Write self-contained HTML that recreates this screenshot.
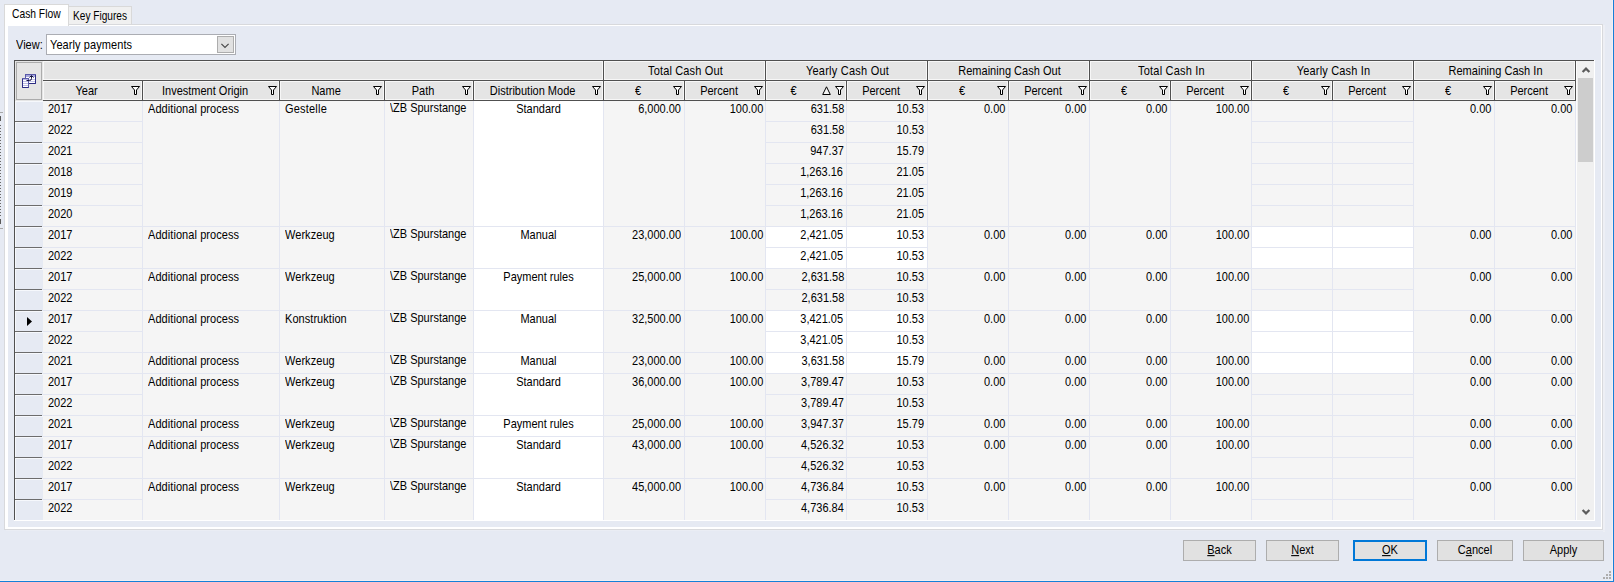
<!DOCTYPE html>
<html><head><meta charset="utf-8"><title>Cash Flow</title>
<style>
html,body{margin:0;padding:0}
body{width:1614px;height:582px;overflow:hidden;background:#E6EAF3;position:relative;font-family:"Liberation Sans",sans-serif;font-size:11px;color:#000}
body div,body svg{position:absolute}
.t{white-space:pre;line-height:13px;height:13px;overflow:visible;transform:scaleY(1.1);transform-origin:0 10.3px}
.btn{box-sizing:border-box;background:#E1E1E1;text-align:center;font-size:11px}
.fn{overflow:visible}
</style></head><body>
<!-- window edges -->
<div style="left:1612px;top:0;width:1px;height:581px;background:#F3EFF3"></div>
<div style="left:0;top:580px;width:1613px;height:1px;background:#F3EFF3"></div>
<div style="left:1613px;top:0;width:1px;height:582px;background:#1580D8"></div>
<div style="left:0;top:581px;width:1614px;height:1px;background:#1580D8"></div>
<div style="left:0;top:112px;width:3px;height:1px;background:#A8A8A8"></div>
<div style="left:0;top:116px;width:1px;height:5px;background:#5A5A5A"></div>
<div style="left:0;top:125px;width:1px;height:92px;background:repeating-linear-gradient(to bottom,#6A6A6A 0,#6A6A6A 1px,transparent 1px,transparent 3px)"></div>
<div style="left:0;top:219px;width:1px;height:5px;background:#5A5A5A"></div>
<div style="left:0;top:228px;width:3px;height:1px;background:#A8A8A8"></div>
<!-- tab panel -->
<div style="left:4px;top:24px;width:1599px;height:506px;background:#D8D9DC"></div>
<div style="left:5px;top:25px;width:1597px;height:504px;background:#fff"></div>
<div style="left:8px;top:26px;width:1593px;height:501px;background:#E6EAF3"></div>
<div style="left:1603px;top:25px;width:2px;height:507px;background:#EDEFF5"></div>
<div style="left:6px;top:530px;width:1599px;height:1px;background:#EAEDF4"></div>
<!-- tabs -->
<div style="left:68px;top:6px;width:64px;height:18px;box-sizing:border-box;background:#F0F0F0;border:1px solid #D9D9D9;border-bottom:none"></div>
<div style="left:4px;top:4px;width:65px;height:22px;box-sizing:border-box;background:#fff;border:1px solid #D9D9D9;border-bottom:none"></div>
<div class="t" style="left:12px;top:8px;transform:scale(0.935,1.1)">Cash Flow</div>
<div class="t" style="left:73px;top:10px;transform:scale(0.92,1.1)">Key Figures</div>
<!-- view combobox -->
<div class="t" style="left:16px;top:39px">View:</div>
<div style="left:46px;top:34px;width:190px;height:21px;box-sizing:border-box;background:#fff;border:1px solid #ABADB3"></div>
<div class="t" style="left:50px;top:39px;letter-spacing:0.08px">Yearly payments</div>
<div style="left:217px;top:36px;width:17px;height:17px;box-sizing:border-box;background:#E1E1E1;border:1px solid #ADADAD"></div>
<svg class="fn" style="left:221px;top:43px" width="8" height="6" viewBox="0 0 8 6"><path d="M0.4 0.9 L4 4.5 L7.6 0.9" stroke="#484848" stroke-width="1.15" fill="none"/></svg>
<!-- grid -->
<div style="left:14px;top:60px;width:1580px;height:460px;background:#F5F5F5;"></div>
<div style="left:15px;top:61px;width:1561px;height:40px;background:#E5E5E5;"></div>
<div style="left:15px;top:101px;width:28px;height:419px;background:#E6EAF3;"></div>
<div style="left:474px;top:101px;width:129px;height:21px;background:#fff;"></div>
<div style="left:43px;top:121px;width:100px;height:1px;background:#E3E6F1;"></div>
<div style="left:766px;top:121px;width:81px;height:1px;background:#E3E6F1;"></div>
<div style="left:847px;top:121px;width:81px;height:1px;background:#E3E6F1;"></div>
<div style="left:1252px;top:121px;width:81px;height:1px;background:#E3E6F1;"></div>
<div style="left:1333px;top:121px;width:81px;height:1px;background:#E3E6F1;"></div>
<div style="left:15px;top:121px;width:27px;height:1px;background:#6C6C6C;"></div>
<div style="left:15px;top:101px;width:28px;height:1px;background:#F6F8FC;"></div>
<div style="left:15px;top:101px;width:1px;height:20px;background:#F6F8FC;"></div>
<div class="t" style="left:48px;top:103px;width:90px;text-align:left;">2017</div>
<div class="t" style="left:148px;top:103px;width:130px;text-align:left;letter-spacing:0.07px">Additional process</div>
<div class="t" style="left:285px;top:103px;width:98px;text-align:left;letter-spacing:0.2px">Gestelle</div>
<div class="t" style="left:390px;top:102px;width:86px;text-align:left;">\ZB Spurstange</div>
<div class="t" style="left:474px;top:103px;width:129px;text-align:center;">Standard</div>
<div class="t" style="left:604px;top:103px;width:77px;text-align:right;">6,000.00</div>
<div class="t" style="left:685px;top:103px;width:78.3px;text-align:right;">100.00</div>
<div class="t" style="left:928px;top:103px;width:77.4px;text-align:right;">0.00</div>
<div class="t" style="left:1009px;top:103px;width:77.4px;text-align:right;">0.00</div>
<div class="t" style="left:1090px;top:103px;width:77.4px;text-align:right;">0.00</div>
<div class="t" style="left:1171px;top:103px;width:78.3px;text-align:right;">100.00</div>
<div class="t" style="left:1414px;top:103px;width:77.4px;text-align:right;">0.00</div>
<div class="t" style="left:1495px;top:103px;width:77.4px;text-align:right;">0.00</div>
<div class="t" style="left:766px;top:103px;width:78.3px;text-align:right;">631.58</div>
<div class="t" style="left:847px;top:103px;width:77px;text-align:right;">10.53</div>
<div style="left:474px;top:122px;width:129px;height:21px;background:#fff;"></div>
<div style="left:43px;top:142px;width:100px;height:1px;background:#E3E6F1;"></div>
<div style="left:766px;top:142px;width:81px;height:1px;background:#E3E6F1;"></div>
<div style="left:847px;top:142px;width:81px;height:1px;background:#E3E6F1;"></div>
<div style="left:1252px;top:142px;width:81px;height:1px;background:#E3E6F1;"></div>
<div style="left:1333px;top:142px;width:81px;height:1px;background:#E3E6F1;"></div>
<div style="left:15px;top:142px;width:27px;height:1px;background:#6C6C6C;"></div>
<div style="left:15px;top:122px;width:28px;height:1px;background:#F6F8FC;"></div>
<div style="left:15px;top:122px;width:1px;height:20px;background:#F6F8FC;"></div>
<div class="t" style="left:48px;top:124px;width:90px;text-align:left;">2022</div>
<div class="t" style="left:766px;top:124px;width:78.3px;text-align:right;">631.58</div>
<div class="t" style="left:847px;top:124px;width:77px;text-align:right;">10.53</div>
<div style="left:474px;top:143px;width:129px;height:21px;background:#fff;"></div>
<div style="left:43px;top:163px;width:100px;height:1px;background:#E3E6F1;"></div>
<div style="left:766px;top:163px;width:81px;height:1px;background:#E3E6F1;"></div>
<div style="left:847px;top:163px;width:81px;height:1px;background:#E3E6F1;"></div>
<div style="left:1252px;top:163px;width:81px;height:1px;background:#E3E6F1;"></div>
<div style="left:1333px;top:163px;width:81px;height:1px;background:#E3E6F1;"></div>
<div style="left:15px;top:163px;width:27px;height:1px;background:#6C6C6C;"></div>
<div style="left:15px;top:143px;width:28px;height:1px;background:#F6F8FC;"></div>
<div style="left:15px;top:143px;width:1px;height:20px;background:#F6F8FC;"></div>
<div class="t" style="left:48px;top:145px;width:90px;text-align:left;">2021</div>
<div class="t" style="left:766px;top:145px;width:77.9px;text-align:right;">947.37</div>
<div class="t" style="left:847px;top:145px;width:77px;text-align:right;">15.79</div>
<div style="left:474px;top:164px;width:129px;height:21px;background:#fff;"></div>
<div style="left:43px;top:184px;width:100px;height:1px;background:#E3E6F1;"></div>
<div style="left:766px;top:184px;width:81px;height:1px;background:#E3E6F1;"></div>
<div style="left:847px;top:184px;width:81px;height:1px;background:#E3E6F1;"></div>
<div style="left:1252px;top:184px;width:81px;height:1px;background:#E3E6F1;"></div>
<div style="left:1333px;top:184px;width:81px;height:1px;background:#E3E6F1;"></div>
<div style="left:15px;top:184px;width:27px;height:1px;background:#6C6C6C;"></div>
<div style="left:15px;top:164px;width:28px;height:1px;background:#F6F8FC;"></div>
<div style="left:15px;top:164px;width:1px;height:20px;background:#F6F8FC;"></div>
<div class="t" style="left:48px;top:166px;width:90px;text-align:left;">2018</div>
<div class="t" style="left:766px;top:166px;width:77.0px;text-align:right;">1,263.16</div>
<div class="t" style="left:847px;top:166px;width:77px;text-align:right;">21.05</div>
<div style="left:474px;top:185px;width:129px;height:21px;background:#fff;"></div>
<div style="left:43px;top:205px;width:100px;height:1px;background:#E3E6F1;"></div>
<div style="left:766px;top:205px;width:81px;height:1px;background:#E3E6F1;"></div>
<div style="left:847px;top:205px;width:81px;height:1px;background:#E3E6F1;"></div>
<div style="left:1252px;top:205px;width:81px;height:1px;background:#E3E6F1;"></div>
<div style="left:1333px;top:205px;width:81px;height:1px;background:#E3E6F1;"></div>
<div style="left:15px;top:205px;width:27px;height:1px;background:#6C6C6C;"></div>
<div style="left:15px;top:185px;width:28px;height:1px;background:#F6F8FC;"></div>
<div style="left:15px;top:185px;width:1px;height:20px;background:#F6F8FC;"></div>
<div class="t" style="left:48px;top:187px;width:90px;text-align:left;">2019</div>
<div class="t" style="left:766px;top:187px;width:77.0px;text-align:right;">1,263.16</div>
<div class="t" style="left:847px;top:187px;width:77px;text-align:right;">21.05</div>
<div style="left:474px;top:206px;width:129px;height:21px;background:#fff;"></div>
<div style="left:43px;top:226px;width:1533px;height:1px;background:#E3E6F1;"></div>
<div style="left:15px;top:226px;width:27px;height:1px;background:#6C6C6C;"></div>
<div style="left:15px;top:206px;width:28px;height:1px;background:#F6F8FC;"></div>
<div style="left:15px;top:206px;width:1px;height:20px;background:#F6F8FC;"></div>
<div class="t" style="left:48px;top:208px;width:90px;text-align:left;">2020</div>
<div class="t" style="left:766px;top:208px;width:77.0px;text-align:right;">1,263.16</div>
<div class="t" style="left:847px;top:208px;width:77px;text-align:right;">21.05</div>
<div style="left:474px;top:227px;width:129px;height:21px;background:#fff;"></div>
<div style="left:766px;top:227px;width:161px;height:21px;background:#fff;"></div>
<div style="left:1252px;top:227px;width:161px;height:21px;background:#fff;"></div>
<div style="left:43px;top:247px;width:100px;height:1px;background:#E3E6F1;"></div>
<div style="left:766px;top:247px;width:81px;height:1px;background:#E3E6F1;"></div>
<div style="left:847px;top:247px;width:81px;height:1px;background:#E3E6F1;"></div>
<div style="left:1252px;top:247px;width:81px;height:1px;background:#E3E6F1;"></div>
<div style="left:1333px;top:247px;width:81px;height:1px;background:#E3E6F1;"></div>
<div style="left:15px;top:247px;width:27px;height:1px;background:#6C6C6C;"></div>
<div style="left:15px;top:227px;width:28px;height:1px;background:#F6F8FC;"></div>
<div style="left:15px;top:227px;width:1px;height:20px;background:#F6F8FC;"></div>
<div class="t" style="left:48px;top:229px;width:90px;text-align:left;">2017</div>
<div class="t" style="left:148px;top:229px;width:130px;text-align:left;letter-spacing:0.07px">Additional process</div>
<div class="t" style="left:285px;top:229px;width:98px;text-align:left;letter-spacing:0.05px">Werkzeug</div>
<div class="t" style="left:390px;top:228px;width:86px;text-align:left;">\ZB Spurstange</div>
<div class="t" style="left:474px;top:229px;width:129px;text-align:center;">Manual</div>
<div class="t" style="left:604px;top:229px;width:77px;text-align:right;">23,000.00</div>
<div class="t" style="left:685px;top:229px;width:78.3px;text-align:right;">100.00</div>
<div class="t" style="left:928px;top:229px;width:77.4px;text-align:right;">0.00</div>
<div class="t" style="left:1009px;top:229px;width:77.4px;text-align:right;">0.00</div>
<div class="t" style="left:1090px;top:229px;width:77.4px;text-align:right;">0.00</div>
<div class="t" style="left:1171px;top:229px;width:78.3px;text-align:right;">100.00</div>
<div class="t" style="left:1414px;top:229px;width:77.4px;text-align:right;">0.00</div>
<div class="t" style="left:1495px;top:229px;width:77.4px;text-align:right;">0.00</div>
<div class="t" style="left:766px;top:229px;width:77.1px;text-align:right;">2,421.05</div>
<div class="t" style="left:847px;top:229px;width:77px;text-align:right;">10.53</div>
<div style="left:474px;top:248px;width:129px;height:21px;background:#fff;"></div>
<div style="left:766px;top:248px;width:161px;height:21px;background:#fff;"></div>
<div style="left:1252px;top:248px;width:161px;height:21px;background:#fff;"></div>
<div style="left:43px;top:268px;width:1533px;height:1px;background:#E3E6F1;"></div>
<div style="left:15px;top:268px;width:27px;height:1px;background:#6C6C6C;"></div>
<div style="left:15px;top:248px;width:28px;height:1px;background:#F6F8FC;"></div>
<div style="left:15px;top:248px;width:1px;height:20px;background:#F6F8FC;"></div>
<div class="t" style="left:48px;top:250px;width:90px;text-align:left;">2022</div>
<div class="t" style="left:766px;top:250px;width:77.1px;text-align:right;">2,421.05</div>
<div class="t" style="left:847px;top:250px;width:77px;text-align:right;">10.53</div>
<div style="left:474px;top:269px;width:129px;height:21px;background:#fff;"></div>
<div style="left:43px;top:289px;width:100px;height:1px;background:#E3E6F1;"></div>
<div style="left:766px;top:289px;width:81px;height:1px;background:#E3E6F1;"></div>
<div style="left:847px;top:289px;width:81px;height:1px;background:#E3E6F1;"></div>
<div style="left:1252px;top:289px;width:81px;height:1px;background:#E3E6F1;"></div>
<div style="left:1333px;top:289px;width:81px;height:1px;background:#E3E6F1;"></div>
<div style="left:15px;top:289px;width:27px;height:1px;background:#6C6C6C;"></div>
<div style="left:15px;top:269px;width:28px;height:1px;background:#F6F8FC;"></div>
<div style="left:15px;top:269px;width:1px;height:20px;background:#F6F8FC;"></div>
<div class="t" style="left:48px;top:271px;width:90px;text-align:left;">2017</div>
<div class="t" style="left:148px;top:271px;width:130px;text-align:left;letter-spacing:0.07px">Additional process</div>
<div class="t" style="left:285px;top:271px;width:98px;text-align:left;letter-spacing:0.05px">Werkzeug</div>
<div class="t" style="left:390px;top:270px;width:86px;text-align:left;">\ZB Spurstange</div>
<div class="t" style="left:474px;top:271px;width:129px;text-align:center;">Payment rules</div>
<div class="t" style="left:604px;top:271px;width:77px;text-align:right;">25,000.00</div>
<div class="t" style="left:685px;top:271px;width:78.3px;text-align:right;">100.00</div>
<div class="t" style="left:928px;top:271px;width:77.4px;text-align:right;">0.00</div>
<div class="t" style="left:1009px;top:271px;width:77.4px;text-align:right;">0.00</div>
<div class="t" style="left:1090px;top:271px;width:77.4px;text-align:right;">0.00</div>
<div class="t" style="left:1171px;top:271px;width:78.3px;text-align:right;">100.00</div>
<div class="t" style="left:1414px;top:271px;width:77.4px;text-align:right;">0.00</div>
<div class="t" style="left:1495px;top:271px;width:77.4px;text-align:right;">0.00</div>
<div class="t" style="left:766px;top:271px;width:78.3px;text-align:right;">2,631.58</div>
<div class="t" style="left:847px;top:271px;width:77px;text-align:right;">10.53</div>
<div style="left:474px;top:290px;width:129px;height:21px;background:#fff;"></div>
<div style="left:43px;top:310px;width:1533px;height:1px;background:#E3E6F1;"></div>
<div style="left:15px;top:310px;width:27px;height:1px;background:#6C6C6C;"></div>
<div style="left:15px;top:290px;width:28px;height:1px;background:#F6F8FC;"></div>
<div style="left:15px;top:290px;width:1px;height:20px;background:#F6F8FC;"></div>
<div class="t" style="left:48px;top:292px;width:90px;text-align:left;">2022</div>
<div class="t" style="left:766px;top:292px;width:78.3px;text-align:right;">2,631.58</div>
<div class="t" style="left:847px;top:292px;width:77px;text-align:right;">10.53</div>
<div style="left:474px;top:311px;width:129px;height:21px;background:#fff;"></div>
<div style="left:766px;top:311px;width:161px;height:21px;background:#fff;"></div>
<div style="left:1252px;top:311px;width:161px;height:21px;background:#fff;"></div>
<div style="left:43px;top:331px;width:100px;height:1px;background:#E3E6F1;"></div>
<div style="left:766px;top:331px;width:81px;height:1px;background:#E3E6F1;"></div>
<div style="left:847px;top:331px;width:81px;height:1px;background:#E3E6F1;"></div>
<div style="left:1252px;top:331px;width:81px;height:1px;background:#E3E6F1;"></div>
<div style="left:1333px;top:331px;width:81px;height:1px;background:#E3E6F1;"></div>
<div style="left:15px;top:331px;width:27px;height:1px;background:#6C6C6C;"></div>
<div style="left:15px;top:311px;width:28px;height:1px;background:#F6F8FC;"></div>
<div style="left:15px;top:311px;width:1px;height:20px;background:#F6F8FC;"></div>
<div class="t" style="left:48px;top:313px;width:90px;text-align:left;">2017</div>
<div class="t" style="left:148px;top:313px;width:130px;text-align:left;letter-spacing:0.07px">Additional process</div>
<div class="t" style="left:285px;top:313px;width:98px;text-align:left;letter-spacing:0.05px">Konstruktion</div>
<div class="t" style="left:390px;top:312px;width:86px;text-align:left;">\ZB Spurstange</div>
<div class="t" style="left:474px;top:313px;width:129px;text-align:center;">Manual</div>
<div class="t" style="left:604px;top:313px;width:77px;text-align:right;">32,500.00</div>
<div class="t" style="left:685px;top:313px;width:78.3px;text-align:right;">100.00</div>
<div class="t" style="left:928px;top:313px;width:77.4px;text-align:right;">0.00</div>
<div class="t" style="left:1009px;top:313px;width:77.4px;text-align:right;">0.00</div>
<div class="t" style="left:1090px;top:313px;width:77.4px;text-align:right;">0.00</div>
<div class="t" style="left:1171px;top:313px;width:78.3px;text-align:right;">100.00</div>
<div class="t" style="left:1414px;top:313px;width:77.4px;text-align:right;">0.00</div>
<div class="t" style="left:1495px;top:313px;width:77.4px;text-align:right;">0.00</div>
<div class="t" style="left:766px;top:313px;width:77.1px;text-align:right;">3,421.05</div>
<div class="t" style="left:847px;top:313px;width:77px;text-align:right;">10.53</div>
<div style="left:474px;top:332px;width:129px;height:21px;background:#fff;"></div>
<div style="left:766px;top:332px;width:161px;height:21px;background:#fff;"></div>
<div style="left:1252px;top:332px;width:161px;height:21px;background:#fff;"></div>
<div style="left:43px;top:352px;width:1533px;height:1px;background:#E3E6F1;"></div>
<div style="left:15px;top:352px;width:27px;height:1px;background:#6C6C6C;"></div>
<div style="left:15px;top:332px;width:28px;height:1px;background:#F6F8FC;"></div>
<div style="left:15px;top:332px;width:1px;height:20px;background:#F6F8FC;"></div>
<div class="t" style="left:48px;top:334px;width:90px;text-align:left;">2022</div>
<div class="t" style="left:766px;top:334px;width:77.1px;text-align:right;">3,421.05</div>
<div class="t" style="left:847px;top:334px;width:77px;text-align:right;">10.53</div>
<div style="left:474px;top:353px;width:129px;height:21px;background:#fff;"></div>
<div style="left:766px;top:353px;width:161px;height:21px;background:#fff;"></div>
<div style="left:1252px;top:353px;width:161px;height:21px;background:#fff;"></div>
<div style="left:43px;top:373px;width:1533px;height:1px;background:#E3E6F1;"></div>
<div style="left:15px;top:373px;width:27px;height:1px;background:#6C6C6C;"></div>
<div style="left:15px;top:353px;width:28px;height:1px;background:#F6F8FC;"></div>
<div style="left:15px;top:353px;width:1px;height:20px;background:#F6F8FC;"></div>
<div class="t" style="left:48px;top:355px;width:90px;text-align:left;">2021</div>
<div class="t" style="left:148px;top:355px;width:130px;text-align:left;letter-spacing:0.07px">Additional process</div>
<div class="t" style="left:285px;top:355px;width:98px;text-align:left;letter-spacing:0.05px">Werkzeug</div>
<div class="t" style="left:390px;top:354px;width:86px;text-align:left;">\ZB Spurstange</div>
<div class="t" style="left:474px;top:355px;width:129px;text-align:center;">Manual</div>
<div class="t" style="left:604px;top:355px;width:77px;text-align:right;">23,000.00</div>
<div class="t" style="left:685px;top:355px;width:78.3px;text-align:right;">100.00</div>
<div class="t" style="left:928px;top:355px;width:77.4px;text-align:right;">0.00</div>
<div class="t" style="left:1009px;top:355px;width:77.4px;text-align:right;">0.00</div>
<div class="t" style="left:1090px;top:355px;width:77.4px;text-align:right;">0.00</div>
<div class="t" style="left:1171px;top:355px;width:78.3px;text-align:right;">100.00</div>
<div class="t" style="left:1414px;top:355px;width:77.4px;text-align:right;">0.00</div>
<div class="t" style="left:1495px;top:355px;width:77.4px;text-align:right;">0.00</div>
<div class="t" style="left:766px;top:355px;width:78.3px;text-align:right;">3,631.58</div>
<div class="t" style="left:847px;top:355px;width:77px;text-align:right;">15.79</div>
<div style="left:474px;top:374px;width:129px;height:21px;background:#fff;"></div>
<div style="left:43px;top:394px;width:100px;height:1px;background:#E3E6F1;"></div>
<div style="left:766px;top:394px;width:81px;height:1px;background:#E3E6F1;"></div>
<div style="left:847px;top:394px;width:81px;height:1px;background:#E3E6F1;"></div>
<div style="left:1252px;top:394px;width:81px;height:1px;background:#E3E6F1;"></div>
<div style="left:1333px;top:394px;width:81px;height:1px;background:#E3E6F1;"></div>
<div style="left:15px;top:394px;width:27px;height:1px;background:#6C6C6C;"></div>
<div style="left:15px;top:374px;width:28px;height:1px;background:#F6F8FC;"></div>
<div style="left:15px;top:374px;width:1px;height:20px;background:#F6F8FC;"></div>
<div class="t" style="left:48px;top:376px;width:90px;text-align:left;">2017</div>
<div class="t" style="left:148px;top:376px;width:130px;text-align:left;letter-spacing:0.07px">Additional process</div>
<div class="t" style="left:285px;top:376px;width:98px;text-align:left;letter-spacing:0.05px">Werkzeug</div>
<div class="t" style="left:390px;top:375px;width:86px;text-align:left;">\ZB Spurstange</div>
<div class="t" style="left:474px;top:376px;width:129px;text-align:center;">Standard</div>
<div class="t" style="left:604px;top:376px;width:77px;text-align:right;">36,000.00</div>
<div class="t" style="left:685px;top:376px;width:78.3px;text-align:right;">100.00</div>
<div class="t" style="left:928px;top:376px;width:77.4px;text-align:right;">0.00</div>
<div class="t" style="left:1009px;top:376px;width:77.4px;text-align:right;">0.00</div>
<div class="t" style="left:1090px;top:376px;width:77.4px;text-align:right;">0.00</div>
<div class="t" style="left:1171px;top:376px;width:78.3px;text-align:right;">100.00</div>
<div class="t" style="left:1414px;top:376px;width:77.4px;text-align:right;">0.00</div>
<div class="t" style="left:1495px;top:376px;width:77.4px;text-align:right;">0.00</div>
<div class="t" style="left:766px;top:376px;width:77.9px;text-align:right;">3,789.47</div>
<div class="t" style="left:847px;top:376px;width:77px;text-align:right;">10.53</div>
<div style="left:474px;top:395px;width:129px;height:21px;background:#fff;"></div>
<div style="left:43px;top:415px;width:1533px;height:1px;background:#E3E6F1;"></div>
<div style="left:15px;top:415px;width:27px;height:1px;background:#6C6C6C;"></div>
<div style="left:15px;top:395px;width:28px;height:1px;background:#F6F8FC;"></div>
<div style="left:15px;top:395px;width:1px;height:20px;background:#F6F8FC;"></div>
<div class="t" style="left:48px;top:397px;width:90px;text-align:left;">2022</div>
<div class="t" style="left:766px;top:397px;width:77.9px;text-align:right;">3,789.47</div>
<div class="t" style="left:847px;top:397px;width:77px;text-align:right;">10.53</div>
<div style="left:474px;top:416px;width:129px;height:21px;background:#fff;"></div>
<div style="left:43px;top:436px;width:1533px;height:1px;background:#E3E6F1;"></div>
<div style="left:15px;top:436px;width:27px;height:1px;background:#6C6C6C;"></div>
<div style="left:15px;top:416px;width:28px;height:1px;background:#F6F8FC;"></div>
<div style="left:15px;top:416px;width:1px;height:20px;background:#F6F8FC;"></div>
<div class="t" style="left:48px;top:418px;width:90px;text-align:left;">2021</div>
<div class="t" style="left:148px;top:418px;width:130px;text-align:left;letter-spacing:0.07px">Additional process</div>
<div class="t" style="left:285px;top:418px;width:98px;text-align:left;letter-spacing:0.05px">Werkzeug</div>
<div class="t" style="left:390px;top:417px;width:86px;text-align:left;">\ZB Spurstange</div>
<div class="t" style="left:474px;top:418px;width:129px;text-align:center;">Payment rules</div>
<div class="t" style="left:604px;top:418px;width:77px;text-align:right;">25,000.00</div>
<div class="t" style="left:685px;top:418px;width:78.3px;text-align:right;">100.00</div>
<div class="t" style="left:928px;top:418px;width:77.4px;text-align:right;">0.00</div>
<div class="t" style="left:1009px;top:418px;width:77.4px;text-align:right;">0.00</div>
<div class="t" style="left:1090px;top:418px;width:77.4px;text-align:right;">0.00</div>
<div class="t" style="left:1171px;top:418px;width:78.3px;text-align:right;">100.00</div>
<div class="t" style="left:1414px;top:418px;width:77.4px;text-align:right;">0.00</div>
<div class="t" style="left:1495px;top:418px;width:77.4px;text-align:right;">0.00</div>
<div class="t" style="left:766px;top:418px;width:77.9px;text-align:right;">3,947.37</div>
<div class="t" style="left:847px;top:418px;width:77px;text-align:right;">15.79</div>
<div style="left:474px;top:437px;width:129px;height:21px;background:#fff;"></div>
<div style="left:43px;top:457px;width:100px;height:1px;background:#E3E6F1;"></div>
<div style="left:766px;top:457px;width:81px;height:1px;background:#E3E6F1;"></div>
<div style="left:847px;top:457px;width:81px;height:1px;background:#E3E6F1;"></div>
<div style="left:1252px;top:457px;width:81px;height:1px;background:#E3E6F1;"></div>
<div style="left:1333px;top:457px;width:81px;height:1px;background:#E3E6F1;"></div>
<div style="left:15px;top:457px;width:27px;height:1px;background:#6C6C6C;"></div>
<div style="left:15px;top:437px;width:28px;height:1px;background:#F6F8FC;"></div>
<div style="left:15px;top:437px;width:1px;height:20px;background:#F6F8FC;"></div>
<div class="t" style="left:48px;top:439px;width:90px;text-align:left;">2017</div>
<div class="t" style="left:148px;top:439px;width:130px;text-align:left;letter-spacing:0.07px">Additional process</div>
<div class="t" style="left:285px;top:439px;width:98px;text-align:left;letter-spacing:0.05px">Werkzeug</div>
<div class="t" style="left:390px;top:438px;width:86px;text-align:left;">\ZB Spurstange</div>
<div class="t" style="left:474px;top:439px;width:129px;text-align:center;">Standard</div>
<div class="t" style="left:604px;top:439px;width:77px;text-align:right;">43,000.00</div>
<div class="t" style="left:685px;top:439px;width:78.3px;text-align:right;">100.00</div>
<div class="t" style="left:928px;top:439px;width:77.4px;text-align:right;">0.00</div>
<div class="t" style="left:1009px;top:439px;width:77.4px;text-align:right;">0.00</div>
<div class="t" style="left:1090px;top:439px;width:77.4px;text-align:right;">0.00</div>
<div class="t" style="left:1171px;top:439px;width:78.3px;text-align:right;">100.00</div>
<div class="t" style="left:1414px;top:439px;width:77.4px;text-align:right;">0.00</div>
<div class="t" style="left:1495px;top:439px;width:77.4px;text-align:right;">0.00</div>
<div class="t" style="left:766px;top:439px;width:77.8px;text-align:right;">4,526.32</div>
<div class="t" style="left:847px;top:439px;width:77px;text-align:right;">10.53</div>
<div style="left:474px;top:458px;width:129px;height:21px;background:#fff;"></div>
<div style="left:43px;top:478px;width:1533px;height:1px;background:#E3E6F1;"></div>
<div style="left:15px;top:478px;width:27px;height:1px;background:#6C6C6C;"></div>
<div style="left:15px;top:458px;width:28px;height:1px;background:#F6F8FC;"></div>
<div style="left:15px;top:458px;width:1px;height:20px;background:#F6F8FC;"></div>
<div class="t" style="left:48px;top:460px;width:90px;text-align:left;">2022</div>
<div class="t" style="left:766px;top:460px;width:77.8px;text-align:right;">4,526.32</div>
<div class="t" style="left:847px;top:460px;width:77px;text-align:right;">10.53</div>
<div style="left:474px;top:479px;width:129px;height:21px;background:#fff;"></div>
<div style="left:43px;top:499px;width:100px;height:1px;background:#E3E6F1;"></div>
<div style="left:766px;top:499px;width:81px;height:1px;background:#E3E6F1;"></div>
<div style="left:847px;top:499px;width:81px;height:1px;background:#E3E6F1;"></div>
<div style="left:1252px;top:499px;width:81px;height:1px;background:#E3E6F1;"></div>
<div style="left:1333px;top:499px;width:81px;height:1px;background:#E3E6F1;"></div>
<div style="left:15px;top:499px;width:27px;height:1px;background:#6C6C6C;"></div>
<div style="left:15px;top:479px;width:28px;height:1px;background:#F6F8FC;"></div>
<div style="left:15px;top:479px;width:1px;height:20px;background:#F6F8FC;"></div>
<div class="t" style="left:48px;top:481px;width:90px;text-align:left;">2017</div>
<div class="t" style="left:148px;top:481px;width:130px;text-align:left;letter-spacing:0.07px">Additional process</div>
<div class="t" style="left:285px;top:481px;width:98px;text-align:left;letter-spacing:0.05px">Werkzeug</div>
<div class="t" style="left:390px;top:480px;width:86px;text-align:left;">\ZB Spurstange</div>
<div class="t" style="left:474px;top:481px;width:129px;text-align:center;">Standard</div>
<div class="t" style="left:604px;top:481px;width:77px;text-align:right;">45,000.00</div>
<div class="t" style="left:685px;top:481px;width:78.3px;text-align:right;">100.00</div>
<div class="t" style="left:928px;top:481px;width:77.4px;text-align:right;">0.00</div>
<div class="t" style="left:1009px;top:481px;width:77.4px;text-align:right;">0.00</div>
<div class="t" style="left:1090px;top:481px;width:77.4px;text-align:right;">0.00</div>
<div class="t" style="left:1171px;top:481px;width:78.3px;text-align:right;">100.00</div>
<div class="t" style="left:1414px;top:481px;width:77.4px;text-align:right;">0.00</div>
<div class="t" style="left:1495px;top:481px;width:77.4px;text-align:right;">0.00</div>
<div class="t" style="left:766px;top:481px;width:77.8px;text-align:right;">4,736.84</div>
<div class="t" style="left:847px;top:481px;width:77px;text-align:right;">10.53</div>
<div style="left:474px;top:500px;width:129px;height:21px;background:#fff;"></div>
<div style="left:43px;top:520px;width:1533px;height:1px;background:#E3E6F1;"></div>
<div style="left:15px;top:520px;width:27px;height:1px;background:#6C6C6C;"></div>
<div style="left:15px;top:500px;width:28px;height:1px;background:#F6F8FC;"></div>
<div style="left:15px;top:500px;width:1px;height:20px;background:#F6F8FC;"></div>
<div class="t" style="left:48px;top:502px;width:90px;text-align:left;">2022</div>
<div class="t" style="left:766px;top:502px;width:77.8px;text-align:right;">4,736.84</div>
<div class="t" style="left:847px;top:502px;width:77px;text-align:right;">10.53</div>
<div style="left:142px;top:101px;width:1px;height:419px;background:#E3E6F1;"></div>
<div style="left:279px;top:101px;width:1px;height:419px;background:#E3E6F1;"></div>
<div style="left:384px;top:101px;width:1px;height:419px;background:#E3E6F1;"></div>
<div style="left:473px;top:101px;width:1px;height:419px;background:#E3E6F1;"></div>
<div style="left:603px;top:101px;width:1px;height:419px;background:#E3E6F1;"></div>
<div style="left:684px;top:101px;width:1px;height:419px;background:#E3E6F1;"></div>
<div style="left:765px;top:101px;width:1px;height:419px;background:#E3E6F1;"></div>
<div style="left:846px;top:101px;width:1px;height:419px;background:#E3E6F1;"></div>
<div style="left:927px;top:101px;width:1px;height:419px;background:#E3E6F1;"></div>
<div style="left:1008px;top:101px;width:1px;height:419px;background:#E3E6F1;"></div>
<div style="left:1089px;top:101px;width:1px;height:419px;background:#E3E6F1;"></div>
<div style="left:1170px;top:101px;width:1px;height:419px;background:#E3E6F1;"></div>
<div style="left:1251px;top:101px;width:1px;height:419px;background:#E3E6F1;"></div>
<div style="left:1332px;top:101px;width:1px;height:419px;background:#E3E6F1;"></div>
<div style="left:1413px;top:101px;width:1px;height:419px;background:#E3E6F1;"></div>
<div style="left:1494px;top:101px;width:1px;height:419px;background:#E3E6F1;"></div>
<div style="left:1575px;top:101px;width:1px;height:419px;background:#E3E6F1;"></div>
<svg class="fn" style="left:27px;top:317px" width="5" height="9" viewBox="0 0 5 9"><path d="M0 0 L5 4.5 L0 9 Z" fill="#000"/></svg>
<div style="left:14px;top:60px;width:1581px;height:1px;background:#505050;"></div>
<div style="left:14px;top:60px;width:1px;height:460px;background:#505050;"></div>
<div style="left:43px;top:80px;width:1533px;height:1px;background:#505050;"></div>
<div style="left:43px;top:100px;width:1533px;height:1px;background:#505050;"></div>
<div style="left:1575px;top:61px;width:1px;height:40px;background:#505050;"></div>
<div style="left:16px;top:62px;width:26px;height:38px;background:#E5E5E5;box-sizing:border-box;border:1px solid #ACACAC"></div>
<div style="left:142px;top:81px;width:1px;height:20px;background:#505050;"></div>
<div style="left:279px;top:81px;width:1px;height:20px;background:#505050;"></div>
<div style="left:384px;top:81px;width:1px;height:20px;background:#505050;"></div>
<div style="left:473px;top:81px;width:1px;height:20px;background:#505050;"></div>
<div style="left:603px;top:61px;width:1px;height:40px;background:#505050;"></div>
<div style="left:684px;top:81px;width:1px;height:20px;background:#505050;"></div>
<div style="left:765px;top:61px;width:1px;height:40px;background:#505050;"></div>
<div style="left:846px;top:81px;width:1px;height:20px;background:#505050;"></div>
<div style="left:927px;top:61px;width:1px;height:40px;background:#505050;"></div>
<div style="left:1008px;top:81px;width:1px;height:20px;background:#505050;"></div>
<div style="left:1089px;top:61px;width:1px;height:40px;background:#505050;"></div>
<div style="left:1170px;top:81px;width:1px;height:20px;background:#505050;"></div>
<div style="left:1251px;top:61px;width:1px;height:40px;background:#505050;"></div>
<div style="left:1332px;top:81px;width:1px;height:20px;background:#505050;"></div>
<div style="left:1413px;top:61px;width:1px;height:40px;background:#505050;"></div>
<div style="left:1494px;top:81px;width:1px;height:20px;background:#505050;"></div>
<div style="left:43px;top:61px;width:560px;height:1px;background:#F7F7F7;"></div>
<div style="left:43px;top:79px;width:560px;height:1px;background:#F7F7F7;"></div>
<div style="left:43px;top:61px;width:1px;height:19px;background:#F7F7F7;"></div>
<div style="left:602px;top:61px;width:1px;height:19px;background:#F7F7F7;"></div>
<div style="left:604px;top:61px;width:161px;height:1px;background:#F7F7F7;"></div>
<div style="left:604px;top:79px;width:161px;height:1px;background:#F7F7F7;"></div>
<div style="left:604px;top:61px;width:1px;height:19px;background:#F7F7F7;"></div>
<div style="left:764px;top:61px;width:1px;height:19px;background:#F7F7F7;"></div>
<div style="left:766px;top:61px;width:161px;height:1px;background:#F7F7F7;"></div>
<div style="left:766px;top:79px;width:161px;height:1px;background:#F7F7F7;"></div>
<div style="left:766px;top:61px;width:1px;height:19px;background:#F7F7F7;"></div>
<div style="left:926px;top:61px;width:1px;height:19px;background:#F7F7F7;"></div>
<div style="left:928px;top:61px;width:161px;height:1px;background:#F7F7F7;"></div>
<div style="left:928px;top:79px;width:161px;height:1px;background:#F7F7F7;"></div>
<div style="left:928px;top:61px;width:1px;height:19px;background:#F7F7F7;"></div>
<div style="left:1088px;top:61px;width:1px;height:19px;background:#F7F7F7;"></div>
<div style="left:1090px;top:61px;width:161px;height:1px;background:#F7F7F7;"></div>
<div style="left:1090px;top:79px;width:161px;height:1px;background:#F7F7F7;"></div>
<div style="left:1090px;top:61px;width:1px;height:19px;background:#F7F7F7;"></div>
<div style="left:1250px;top:61px;width:1px;height:19px;background:#F7F7F7;"></div>
<div style="left:1252px;top:61px;width:161px;height:1px;background:#F7F7F7;"></div>
<div style="left:1252px;top:79px;width:161px;height:1px;background:#F7F7F7;"></div>
<div style="left:1252px;top:61px;width:1px;height:19px;background:#F7F7F7;"></div>
<div style="left:1412px;top:61px;width:1px;height:19px;background:#F7F7F7;"></div>
<div style="left:1414px;top:61px;width:161px;height:1px;background:#F7F7F7;"></div>
<div style="left:1414px;top:79px;width:161px;height:1px;background:#F7F7F7;"></div>
<div style="left:1414px;top:61px;width:1px;height:19px;background:#F7F7F7;"></div>
<div style="left:1574px;top:61px;width:1px;height:19px;background:#F7F7F7;"></div>
<div style="left:43px;top:81px;width:99px;height:1px;background:#F7F7F7;"></div>
<div style="left:43px;top:99px;width:99px;height:1px;background:#F7F7F7;"></div>
<div style="left:43px;top:81px;width:1px;height:19px;background:#F7F7F7;"></div>
<div style="left:141px;top:81px;width:1px;height:19px;background:#F7F7F7;"></div>
<div style="left:143px;top:81px;width:136px;height:1px;background:#F7F7F7;"></div>
<div style="left:143px;top:99px;width:136px;height:1px;background:#F7F7F7;"></div>
<div style="left:143px;top:81px;width:1px;height:19px;background:#F7F7F7;"></div>
<div style="left:278px;top:81px;width:1px;height:19px;background:#F7F7F7;"></div>
<div style="left:280px;top:81px;width:104px;height:1px;background:#F7F7F7;"></div>
<div style="left:280px;top:99px;width:104px;height:1px;background:#F7F7F7;"></div>
<div style="left:280px;top:81px;width:1px;height:19px;background:#F7F7F7;"></div>
<div style="left:383px;top:81px;width:1px;height:19px;background:#F7F7F7;"></div>
<div style="left:385px;top:81px;width:88px;height:1px;background:#F7F7F7;"></div>
<div style="left:385px;top:99px;width:88px;height:1px;background:#F7F7F7;"></div>
<div style="left:385px;top:81px;width:1px;height:19px;background:#F7F7F7;"></div>
<div style="left:472px;top:81px;width:1px;height:19px;background:#F7F7F7;"></div>
<div style="left:474px;top:81px;width:129px;height:1px;background:#F7F7F7;"></div>
<div style="left:474px;top:99px;width:129px;height:1px;background:#F7F7F7;"></div>
<div style="left:474px;top:81px;width:1px;height:19px;background:#F7F7F7;"></div>
<div style="left:602px;top:81px;width:1px;height:19px;background:#F7F7F7;"></div>
<div style="left:604px;top:81px;width:80px;height:1px;background:#F7F7F7;"></div>
<div style="left:604px;top:99px;width:80px;height:1px;background:#F7F7F7;"></div>
<div style="left:604px;top:81px;width:1px;height:19px;background:#F7F7F7;"></div>
<div style="left:683px;top:81px;width:1px;height:19px;background:#F7F7F7;"></div>
<div style="left:685px;top:81px;width:80px;height:1px;background:#F7F7F7;"></div>
<div style="left:685px;top:99px;width:80px;height:1px;background:#F7F7F7;"></div>
<div style="left:685px;top:81px;width:1px;height:19px;background:#F7F7F7;"></div>
<div style="left:764px;top:81px;width:1px;height:19px;background:#F7F7F7;"></div>
<div style="left:766px;top:81px;width:80px;height:1px;background:#F7F7F7;"></div>
<div style="left:766px;top:99px;width:80px;height:1px;background:#F7F7F7;"></div>
<div style="left:766px;top:81px;width:1px;height:19px;background:#F7F7F7;"></div>
<div style="left:845px;top:81px;width:1px;height:19px;background:#F7F7F7;"></div>
<div style="left:847px;top:81px;width:80px;height:1px;background:#F7F7F7;"></div>
<div style="left:847px;top:99px;width:80px;height:1px;background:#F7F7F7;"></div>
<div style="left:847px;top:81px;width:1px;height:19px;background:#F7F7F7;"></div>
<div style="left:926px;top:81px;width:1px;height:19px;background:#F7F7F7;"></div>
<div style="left:928px;top:81px;width:80px;height:1px;background:#F7F7F7;"></div>
<div style="left:928px;top:99px;width:80px;height:1px;background:#F7F7F7;"></div>
<div style="left:928px;top:81px;width:1px;height:19px;background:#F7F7F7;"></div>
<div style="left:1007px;top:81px;width:1px;height:19px;background:#F7F7F7;"></div>
<div style="left:1009px;top:81px;width:80px;height:1px;background:#F7F7F7;"></div>
<div style="left:1009px;top:99px;width:80px;height:1px;background:#F7F7F7;"></div>
<div style="left:1009px;top:81px;width:1px;height:19px;background:#F7F7F7;"></div>
<div style="left:1088px;top:81px;width:1px;height:19px;background:#F7F7F7;"></div>
<div style="left:1090px;top:81px;width:80px;height:1px;background:#F7F7F7;"></div>
<div style="left:1090px;top:99px;width:80px;height:1px;background:#F7F7F7;"></div>
<div style="left:1090px;top:81px;width:1px;height:19px;background:#F7F7F7;"></div>
<div style="left:1169px;top:81px;width:1px;height:19px;background:#F7F7F7;"></div>
<div style="left:1171px;top:81px;width:80px;height:1px;background:#F7F7F7;"></div>
<div style="left:1171px;top:99px;width:80px;height:1px;background:#F7F7F7;"></div>
<div style="left:1171px;top:81px;width:1px;height:19px;background:#F7F7F7;"></div>
<div style="left:1250px;top:81px;width:1px;height:19px;background:#F7F7F7;"></div>
<div style="left:1252px;top:81px;width:80px;height:1px;background:#F7F7F7;"></div>
<div style="left:1252px;top:99px;width:80px;height:1px;background:#F7F7F7;"></div>
<div style="left:1252px;top:81px;width:1px;height:19px;background:#F7F7F7;"></div>
<div style="left:1331px;top:81px;width:1px;height:19px;background:#F7F7F7;"></div>
<div style="left:1333px;top:81px;width:80px;height:1px;background:#F7F7F7;"></div>
<div style="left:1333px;top:99px;width:80px;height:1px;background:#F7F7F7;"></div>
<div style="left:1333px;top:81px;width:1px;height:19px;background:#F7F7F7;"></div>
<div style="left:1412px;top:81px;width:1px;height:19px;background:#F7F7F7;"></div>
<div style="left:1414px;top:81px;width:80px;height:1px;background:#F7F7F7;"></div>
<div style="left:1414px;top:99px;width:80px;height:1px;background:#F7F7F7;"></div>
<div style="left:1414px;top:81px;width:1px;height:19px;background:#F7F7F7;"></div>
<div style="left:1493px;top:81px;width:1px;height:19px;background:#F7F7F7;"></div>
<div style="left:1495px;top:81px;width:80px;height:1px;background:#F7F7F7;"></div>
<div style="left:1495px;top:99px;width:80px;height:1px;background:#F7F7F7;"></div>
<div style="left:1495px;top:81px;width:1px;height:19px;background:#F7F7F7;"></div>
<div style="left:1574px;top:81px;width:1px;height:19px;background:#F7F7F7;"></div>
<div style="left:1594px;top:60px;width:1px;height:461px;background:#fff;"></div>
<div style="left:14px;top:520px;width:1581px;height:1px;background:#fff;"></div>
<div class="t" style="left:43.6px;top:85px;width:86px;text-align:center;">Year</div>
<svg class="fn" style="left:131px;top:86px" width="9" height="9" viewBox="0 0 9 9"><path d="M0.5 0.5 H8.5 L5.5 4 V8.5 H3.5 V4 Z" fill="#fff" stroke="#000" stroke-width="1"/></svg>
<div class="t" style="left:143.6px;top:85px;width:123px;text-align:center;">Investment Origin</div>
<svg class="fn" style="left:268px;top:86px" width="9" height="9" viewBox="0 0 9 9"><path d="M0.5 0.5 H8.5 L5.5 4 V8.5 H3.5 V4 Z" fill="#fff" stroke="#000" stroke-width="1"/></svg>
<div class="t" style="left:280.6px;top:85px;width:91px;text-align:center;">Name</div>
<svg class="fn" style="left:373px;top:86px" width="9" height="9" viewBox="0 0 9 9"><path d="M0.5 0.5 H8.5 L5.5 4 V8.5 H3.5 V4 Z" fill="#fff" stroke="#000" stroke-width="1"/></svg>
<div class="t" style="left:385.6px;top:85px;width:75px;text-align:center;">Path</div>
<svg class="fn" style="left:462px;top:86px" width="9" height="9" viewBox="0 0 9 9"><path d="M0.5 0.5 H8.5 L5.5 4 V8.5 H3.5 V4 Z" fill="#fff" stroke="#000" stroke-width="1"/></svg>
<div class="t" style="left:474.6px;top:85px;width:116px;text-align:center;">Distribution Mode</div>
<svg class="fn" style="left:592px;top:86px" width="9" height="9" viewBox="0 0 9 9"><path d="M0.5 0.5 H8.5 L5.5 4 V8.5 H3.5 V4 Z" fill="#fff" stroke="#000" stroke-width="1"/></svg>
<div class="t" style="left:604.6px;top:85px;width:67px;text-align:center;">€</div>
<svg class="fn" style="left:673px;top:86px" width="9" height="9" viewBox="0 0 9 9"><path d="M0.5 0.5 H8.5 L5.5 4 V8.5 H3.5 V4 Z" fill="#fff" stroke="#000" stroke-width="1"/></svg>
<div class="t" style="left:685.6px;top:85px;width:67px;text-align:center;">Percent</div>
<svg class="fn" style="left:754px;top:86px" width="9" height="9" viewBox="0 0 9 9"><path d="M0.5 0.5 H8.5 L5.5 4 V8.5 H3.5 V4 Z" fill="#fff" stroke="#000" stroke-width="1"/></svg>
<div class="t" style="left:766.6px;top:85px;width:54px;text-align:center;">€</div>
<svg class="fn" style="left:835px;top:86px" width="9" height="9" viewBox="0 0 9 9"><path d="M0.5 0.5 H8.5 L5.5 4 V8.5 H3.5 V4 Z" fill="#fff" stroke="#000" stroke-width="1"/></svg>
<div class="t" style="left:847.6px;top:85px;width:67px;text-align:center;">Percent</div>
<svg class="fn" style="left:916px;top:86px" width="9" height="9" viewBox="0 0 9 9"><path d="M0.5 0.5 H8.5 L5.5 4 V8.5 H3.5 V4 Z" fill="#fff" stroke="#000" stroke-width="1"/></svg>
<div class="t" style="left:928.6px;top:85px;width:67px;text-align:center;">€</div>
<svg class="fn" style="left:997px;top:86px" width="9" height="9" viewBox="0 0 9 9"><path d="M0.5 0.5 H8.5 L5.5 4 V8.5 H3.5 V4 Z" fill="#fff" stroke="#000" stroke-width="1"/></svg>
<div class="t" style="left:1009.6px;top:85px;width:67px;text-align:center;">Percent</div>
<svg class="fn" style="left:1078px;top:86px" width="9" height="9" viewBox="0 0 9 9"><path d="M0.5 0.5 H8.5 L5.5 4 V8.5 H3.5 V4 Z" fill="#fff" stroke="#000" stroke-width="1"/></svg>
<div class="t" style="left:1090.6px;top:85px;width:67px;text-align:center;">€</div>
<svg class="fn" style="left:1159px;top:86px" width="9" height="9" viewBox="0 0 9 9"><path d="M0.5 0.5 H8.5 L5.5 4 V8.5 H3.5 V4 Z" fill="#fff" stroke="#000" stroke-width="1"/></svg>
<div class="t" style="left:1171.6px;top:85px;width:67px;text-align:center;">Percent</div>
<svg class="fn" style="left:1240px;top:86px" width="9" height="9" viewBox="0 0 9 9"><path d="M0.5 0.5 H8.5 L5.5 4 V8.5 H3.5 V4 Z" fill="#fff" stroke="#000" stroke-width="1"/></svg>
<div class="t" style="left:1252.6px;top:85px;width:67px;text-align:center;">€</div>
<svg class="fn" style="left:1321px;top:86px" width="9" height="9" viewBox="0 0 9 9"><path d="M0.5 0.5 H8.5 L5.5 4 V8.5 H3.5 V4 Z" fill="#fff" stroke="#000" stroke-width="1"/></svg>
<div class="t" style="left:1333.6px;top:85px;width:67px;text-align:center;">Percent</div>
<svg class="fn" style="left:1402px;top:86px" width="9" height="9" viewBox="0 0 9 9"><path d="M0.5 0.5 H8.5 L5.5 4 V8.5 H3.5 V4 Z" fill="#fff" stroke="#000" stroke-width="1"/></svg>
<div class="t" style="left:1414.6px;top:85px;width:67px;text-align:center;">€</div>
<svg class="fn" style="left:1483px;top:86px" width="9" height="9" viewBox="0 0 9 9"><path d="M0.5 0.5 H8.5 L5.5 4 V8.5 H3.5 V4 Z" fill="#fff" stroke="#000" stroke-width="1"/></svg>
<div class="t" style="left:1495.6px;top:85px;width:67px;text-align:center;">Percent</div>
<svg class="fn" style="left:1564px;top:86px" width="9" height="9" viewBox="0 0 9 9"><path d="M0.5 0.5 H8.5 L5.5 4 V8.5 H3.5 V4 Z" fill="#fff" stroke="#000" stroke-width="1"/></svg>
<svg class="fn" style="left:822px;top:86px" width="9" height="9" viewBox="0 0 9 9"><path d="M4.5 0.8 L8.3 8.5 H0.7 Z" fill="#F4F4F4" stroke="#000" stroke-width="1"/></svg>
<div class="t" style="left:605px;top:65px;width:161px;text-align:center;letter-spacing:0.15px">Total Cash Out</div>
<div class="t" style="left:767px;top:65px;width:161px;text-align:center;letter-spacing:0.23px">Yearly Cash Out</div>
<div class="t" style="left:929px;top:65px;width:161px;text-align:center;letter-spacing:0.03px">Remaining Cash Out</div>
<div class="t" style="left:1091px;top:65px;width:161px;text-align:center;letter-spacing:0.2px">Total Cash In</div>
<div class="t" style="left:1253px;top:65px;width:161px;text-align:center;letter-spacing:0.16px">Yearly Cash In</div>
<div class="t" style="left:1415px;top:65px;width:161px;text-align:center;letter-spacing:0.03px">Remaining Cash In</div>
<svg class="fn" style="left:22px;top:74px" width="14" height="14" viewBox="0 0 14 14">
<rect x="3.5" y="0.5" width="10" height="9" fill="#fff" stroke="#5A5AA8"/>
<rect x="4" y="1" width="9" height="2" fill="#A6A6DC"/>
<path d="M4 5.5 H13 M4 7.5 H13" stroke="#C6C6EA" fill="none"/>
<path d="M13.5 1 V9.5 H7" stroke="#2E2E84" fill="none"/>
<rect x="0.5" y="4.5" width="6" height="9" fill="#fff" stroke="#5A5AA8"/>
<rect x="1" y="5" width="5" height="1" fill="#B8B8E4"/>
<path d="M1 7.5 H6 M1 9.5 H6 M1 11.5 H6" stroke="#BCBCE4" fill="none"/>
<path d="M0.5 5 V13.5 H6.5" stroke="#2E2E84" fill="none"/>
<path d="M4.5 6.5 H7.5 Q9.5 6.5 9.5 4.5 V2" stroke="#14143C" fill="none"/>
<path d="M7.5 3.5 L9.5 1.5 L11.5 3.5" stroke="#14143C" fill="none"/>
</svg>
<div style="left:1576px;top:61px;width:1px;height:459px;background:#FDFDFD;"></div>
<div style="left:1577px;top:61px;width:17px;height:459px;background:#F0F0F0;"></div>
<div style="left:1578px;top:78px;width:15px;height:84px;background:#CDCDCD;"></div>
<svg class="fn" style="left:1581.6px;top:67px" width="8" height="6" viewBox="0 0 8 6"><path d="M0.6 5 L4 1.6 L7.4 5" stroke="#5C5C5C" stroke-width="2.2" fill="none"/></svg>
<svg class="fn" style="left:1581.6px;top:509px" width="8" height="6" viewBox="0 0 8 6"><path d="M0.6 1 L4 4.4 L7.4 1" stroke="#5C5C5C" stroke-width="2.2" fill="none"/></svg>
<!-- buttons -->
<div class="btn" style="left:1183px;top:540px;width:73px;height:21px;border:1px solid #ADADAD"></div><div class="t" style="left:1183px;top:544px;width:73px;text-align:center"><u>B</u>ack</div>
<div class="btn" style="left:1266px;top:540px;width:73px;height:21px;border:1px solid #ADADAD"></div><div class="t" style="left:1266px;top:544px;width:73px;text-align:center"><u>N</u>ext</div>
<div class="btn" style="left:1353px;top:540px;width:74px;height:21px;border:2px solid #0078D7"></div><div class="t" style="left:1353px;top:544px;width:74px;text-align:center"><u>O</u>K</div>
<div class="btn" style="left:1437px;top:540px;width:76px;height:21px;border:1px solid #ADADAD"></div><div class="t" style="left:1437px;top:544px;width:76px;text-align:center">C<u>a</u>ncel</div>
<div class="btn" style="left:1523px;top:540px;width:81px;height:21px;border:1px solid #ADADAD"></div><div class="t" style="left:1523px;top:544px;width:81px;text-align:center">Apply</div>
<!-- grip -->
<svg class="fn" style="left:1603px;top:571px" width="8" height="8" viewBox="0 0 8 8"><g fill="#ADADAD"><rect x="6" y="0" width="2" height="2"/><rect x="3" y="3" width="2" height="2"/><rect x="6" y="3" width="2" height="2"/><rect x="0" y="6" width="2" height="2"/><rect x="3" y="6" width="2" height="2"/><rect x="6" y="6" width="2" height="2"/></g></svg>
</body></html>
